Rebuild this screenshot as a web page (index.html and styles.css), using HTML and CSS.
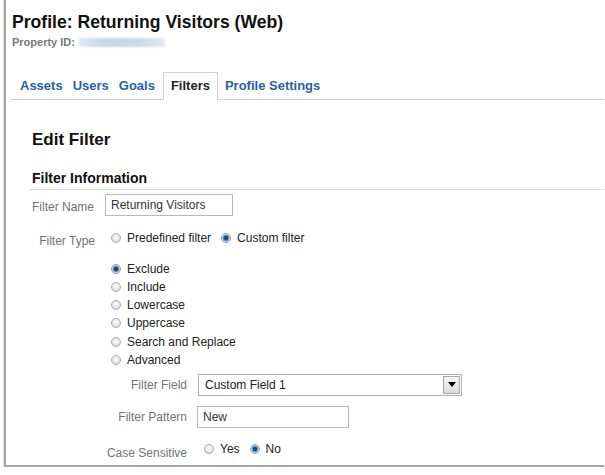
FILE: index.html
```html
<!DOCTYPE html>
<html>
<head>
<meta charset="utf-8">
<link rel="stylesheet" href="styles.css">
</head>
<body>
<div class="frame">
  <h1 class="title">Profile: Returning Visitors (Web)</h1>
  <div class="property">Property ID: <span class="blur"></span></div>
  <nav class="tabs">
    <span class="tab">Assets</span>
    <span class="tab">Users</span>
    <span class="tab">Goals</span>
    <span class="tab active">Filters</span>
    <span class="tab">Profile Settings</span>
  </nav>
  <section class="content">
    <h2 class="edit-title">Edit Filter</h2>
    <h3 class="section-title">Filter Information</h3>
    <div class="form">
      <div class="row name-row">
        <span class="label lbl-name">Filter Name</span>
        <div class="input name-input">Returning Visitors</div>
      </div>
      <div class="row type-row">
        <span class="label lbl-type">Filter Type</span>
        <div class="inline-radios">
          <span class="radio"><span class="dot"></span>Predefined filter</span>
          <span class="radio"><span class="dot on"></span>Custom filter</span>
        </div>
      </div>
      <div class="row list-row">
        <span class="label"></span>
        <div class="controls">
          <div class="radio-list">
            <span class="radio"><span class="dot on"></span>Exclude</span>
            <span class="radio"><span class="dot"></span>Include</span>
            <span class="radio"><span class="dot"></span>Lowercase</span>
            <span class="radio"><span class="dot"></span>Uppercase</span>
            <span class="radio"><span class="dot"></span>Search and Replace</span>
            <span class="radio"><span class="dot"></span>Advanced</span>
          </div>
          <div class="subform">
            <div class="srow field-row">
              <span class="label">Filter Field</span>
              <div class="select">
                <span>Custom Field 1</span>
                <span class="arrow"><svg width="8" height="5" viewBox="0 0 8 5"><path d="M0 0H8L4 5Z" fill="#000"/></svg></span>
              </div>
            </div>
            <div class="srow pattern-row">
              <span class="label">Filter Pattern</span>
              <div class="input pattern-input">New</div>
            </div>
            <div class="srow case-row">
              <span class="label lbl-case">Case Sensitive</span>
              <div class="inline-radios">
                <span class="radio"><span class="dot"></span>Yes</span>
                <span class="radio"><span class="dot on"></span>No</span>
              </div>
            </div>
          </div>
        </div>
      </div>
    </div>
  </section>
</div>
</body>
</html>
```
FILE: styles.css
```css
* { box-sizing: border-box; }
html, body { margin: 0; padding: 0; background: #fff; }
body {
  font-family: "Liberation Sans", Arial, sans-serif;
  color: #222;
  overflow: hidden;
}
.frame {
  margin-left: 4px;
  width: 600px;
  height: 467px;
  border-left: 2px solid #a4a4a4;
  border-bottom: 2px solid #a4a4a4;
  box-shadow: -1px 1px 1px rgba(0,0,0,0.12);
  overflow: hidden;
}
.title {
  margin: 0;
  padding: 12px 0 0 6px;
  font-size: 17.6px;
  line-height: 20px;
  font-weight: bold;
  color: #111;
}
.property {
  margin-top: 3px;
  padding-left: 6px;
  font-size: 11px;
  line-height: 14px;
  font-weight: bold;
  color: #777;
  display: flex;
  align-items: center;
}
.blur {
  display: inline-block;
  width: 86px;
  height: 9px;
  margin-left: 4px;
  background: linear-gradient(to right, #dfe8f1, #c5d6e6 30%, #cbdaea 70%, #e2eaf2);
  filter: blur(1.2px);
}
.tabs {
  margin: 23px 0 0 4px;
  padding-left: 5px;
  display: flex;
  align-items: flex-end;
  border-bottom: 1px solid #cfcfcf;
  height: 28px;
}
.tab {
  padding: 0 5px;
  font-size: 13px;
  line-height: 26px;
  font-weight: bold;
  color: #2862a2;
}
.tab.active {
  color: #222;
  padding: 0 7px 1px;
  margin: 0 2px -1px 3px;
  border: 1px solid #d0d0d0;
  border-bottom: none;
  background: #fff;
}
.content { padding-left: 24px; }
.edit-title {
  margin: 30px 0 0 2px;
  font-size: 17px;
  line-height: 20px;
  font-weight: bold;
  color: #111;
}
.section-title {
  margin: 20px 0 0;
  padding: 0 0 2px 2px;
  font-size: 14px;
  line-height: 17px;
  font-weight: bold;
  color: #111;
  border-bottom: 1px solid #dedede;
}
.form {
  margin-left: 2px;
  font-size: 12px;
}
.row {
  display: grid;
  grid-template-columns: 63px 1fr;
  column-gap: 10px;
  align-items: center;
}
.label {
  text-align: right;
  color: #737373;
  white-space: nowrap;
}
.name-row { margin-top: 4px; }
.lbl-name { padding-top: 3px; text-align: left; }
.input {
  height: 22px;
  border: 1px solid #b8b8b8;
  padding-left: 5px;
  line-height: 20px;
  color: #333;
}
.name-input { width: 128px; }
.type-row { margin-top: 12px; height: 16px; }
.lbl-type { padding-top: 6px; }
.inline-radios {
  display: flex;
  align-items: center;
  gap: 4px;
  line-height: 16px;
  color: #222;
}
.radio {
  display: flex;
  align-items: center;
  color: #222;
}
.dot {
  width: 10px;
  height: 10px;
  margin: 0 6px;
  border-radius: 50%;
  border: 1px solid #acacac;
  background: radial-gradient(circle at 50% 40%, #fbfbfb 0, #ececec 45%, #d0d0d0 100%);
  flex: none;
}
.dot.on {
  border-color: #8da3b8;
  background: radial-gradient(circle, #0f3a63 0, #1f5586 1.8px, #7fa3c4 3px, #e9eef3 4px, #dadfe4 100%);
}
.list-row { align-items: start; margin-top: 16px; }
.radio-list {
  display: flex;
  flex-direction: column;
}
.radio-list .radio { height: 18.15px; }
.subform { margin-top: 5px; }
.srow {
  display: grid;
  grid-template-columns: 82px 1fr;
  column-gap: 11px;
  align-items: center;
}
.select {
  width: 264px;
  height: 22px;
  border: 1px solid #b0b0b0;
  display: flex;
  align-items: center;
  justify-content: space-between;
  padding: 0 1px 0 6px;
  color: #222;
}
.arrow {
  width: 17px;
  height: 18px;
  border: 1px solid #a8a8a8;
  background: linear-gradient(#f7f7f7, #dcdcdc);
  display: flex;
  align-items: center;
  justify-content: center;
}
.pattern-row { margin-top: 10px; }
.pattern-input { width: 152px; margin-left: -1px; height: 22px; }
.case-row { margin-top: 11px; height: 16px; }
.lbl-case { padding-top: 7px; }
```
